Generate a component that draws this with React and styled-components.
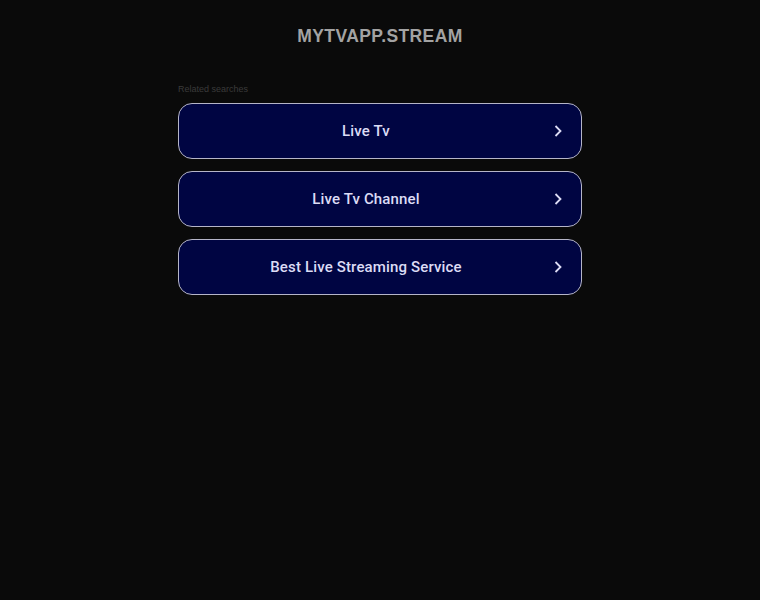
import React from "react";
import styled, { createGlobalStyle } from "styled-components";

const GlobalStyle = createGlobalStyle`
  html, body {
    margin: 0;
    padding: 0;
    background: #0a0a0a;
  }
  body {
    font-family: Arial, "Liberation Sans", sans-serif;
  }
`;

const Page = styled.div`
  min-height: 600px;
  background: #0a0a0a;
  display: flex;
  flex-direction: column;
  align-items: center;
`;

const Domain = styled.h1`
  margin: 26px 0 0;
  font-size: 17.5px;
  font-weight: 700;
  letter-spacing: 0.4px;
  color: #a3a3a3;
  line-height: 20px;
`;

const Related = styled.div`
  width: 404px;
  margin-top: 37px;
`;

const Caption = styled.div`
  font-size: 9px;
  color: #3a3a3a;
  line-height: 12px;
  margin-bottom: 8px;
`;

const List = styled.div`
  display: flex;
  flex-direction: column;
  gap: 12px;
`;

const Link = styled.a`
  position: relative;
  display: flex;
  align-items: center;
  justify-content: center;
  height: 56px;
  box-sizing: border-box;
  padding-right: 28px;
  border: 1px solid #b5b5c8;
  border-radius: 14px;
  background: #000542;
  color: #dcdcf5;
  font-family: Roboto, "Liberation Sans", sans-serif;
  font-size: 15px;
  font-weight: 500;
  letter-spacing: 0.15px;
  text-decoration: none;
`;

const Arrow = styled.svg`
  position: absolute;
  right: 18px;
  top: 50%;
  transform: translateY(-50%);
`;

const searches = ["Live Tv", "Live Tv Channel", "Best Live Streaming Service"];

export default function App() {
  return (
    <Page>
      <GlobalStyle />
      <Domain>MYTVAPP.STREAM</Domain>
      <Related>
        <Caption>Related searches</Caption>
        <List>
          {searches.map((s) => (
            <Link key={s} href="#">
              {s}
              <Arrow width="10" height="14" viewBox="0 0 10 14">
                <path d="M2.5 2 L7.5 7 L2.5 12" fill="none" stroke="#dcdcf5" strokeWidth="1.8" />
              </Arrow>
            </Link>
          ))}
        </List>
      </Related>
    </Page>
  );
}
